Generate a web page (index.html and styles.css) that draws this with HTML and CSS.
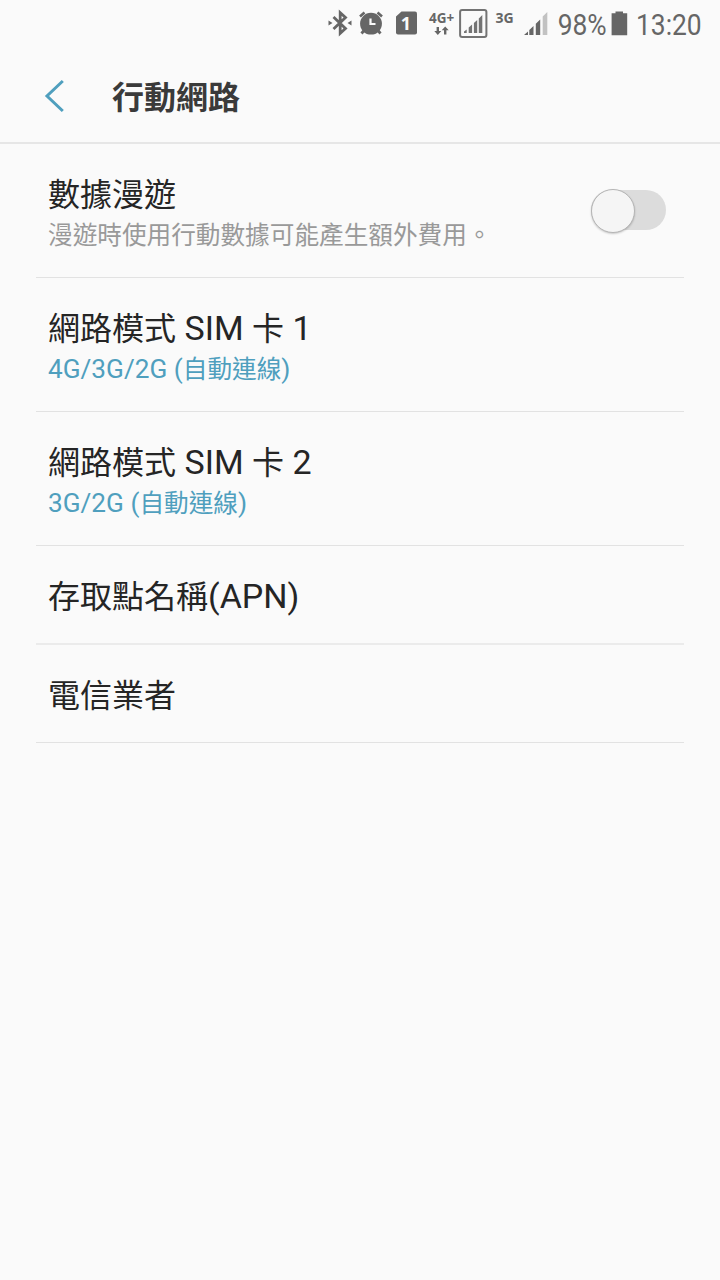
FILE: index.html
```
<!DOCTYPE html>
<html lang="zh-Hant">
<head>
    <meta charset="UTF-8">
    <meta name="viewport" content="width=device-width, initial-scale=1.0">
    <title>行動網路</title>
    <link rel="stylesheet" href="styles.css">
</head>
<body>
    <div class="status-bar">
        <svg class="icon-bluetooth" width="24" height="28" viewBox="0 0 24 28">
            <path d="M5.5 8 L17.5 19.5 L12.2 24.3 V3.7 L17.5 8.5 L5.5 20" fill="none" stroke="#666" stroke-width="2.8"/>
            <path d="M0.5 11.5 L4.5 14 L0.5 16.5 Z M23.5 11.5 L19.5 14 L23.5 16.5 Z" fill="#666"/>
        </svg>
        <svg class="icon-alarm" width="26" height="28" viewBox="0 0 26 28">
            <circle cx="13" cy="14.7" r="10.9" fill="#666"/>
            <path d="M2 7.5 L6.5 3.5 M24 7.5 L19.5 3.5" stroke="#666" stroke-width="2.6"/>
            <path d="M6 21.5 L3.5 24.5 M20 21.5 L22.5 24.5" stroke="#666" stroke-width="2.8"/>
            <path d="M12.5 9.5 V15 H17.5" fill="none" stroke="#fafafa" stroke-width="2.2"/>
        </svg>
        <svg class="icon-sim" width="22" height="28" viewBox="0 0 22 28">
            <path d="M5.5 2.5 H19 Q21 2.5 21 4.5 V23.5 Q21 25.5 19 25.5 H2 Q0 25.5 0 23.5 V7.5 Z" fill="#666"/>
            <text class="sim-number" x="10" y="20.6">1</text>
        </svg>
        <div class="network">
            <span class="network-type">4G+</span>
            <svg width="16" height="10" viewBox="0 0 16 10">
                <path d="M2.6 1 H5 V5 H7.3 L3.8 9 L0.3 5 H2.6 Z M10 8.6 H12.4 V4.2 H14.7 L11.2 0.4 L7.7 4.2 H10 Z" fill="#666"/>
            </svg>
        </div>
        <svg class="icon-signal-boxed" width="29" height="30" viewBox="0 0 29 30">
            <rect x="1.1" y="1.1" width="26.3" height="26.8" rx="2" fill="none" stroke="#737373" stroke-width="2"/>
            <path d="M5 24 V22.4 L7.7 20.4 V24 Z M9.7 24 V18.4 L13.1 15.6 V24 Z M14.9 24 V13.9 L18.2 11 V24 Z M19.8 24 V9.4 L23.3 6 V24 Z" fill="#737373"/>
        </svg>
        <span class="network-type second">3G</span>
        <svg class="icon-signal" width="26" height="28" viewBox="0 0 26 28">
            <path d="M0 25 L4 21.6 V25 Z M5.3 25 V20 L9.5 16 V25 Z M11.8 25 V13.8 L16.2 9.6 V25 Z" fill="#666"/>
            <path d="M18.7 25 V6.5 L23.3 2 V25 Z" fill="#c2c2c2"/>
        </svg>
        <span class="battery-level">98%</span>
        <svg class="icon-battery" width="17" height="28" viewBox="0 0 17 28">
            <path d="M0.6 3.2 H4.5 V1.4 H12 V3.2 H16.2 V25.2 H0.6 Z" fill="#666"/>
        </svg>
        <span class="clock">13:20</span>
    </div>

    <header>
        <svg class="back" width="24" height="36" viewBox="0 0 24 36">
            <path d="M19.8 3 L4 18 L19.8 33" fill="none" stroke="#4f9fbe" stroke-width="3"/>
        </svg>
        <h1>行動網路</h1>
    </header>

    <main class="settings">
        <div class="item item-roaming">
            <div>
                <div class="title">數據漫遊</div>
                <div class="summary muted">漫遊時使用行動數據可能產生額外費用。</div>
            </div>
            <div class="switch"><div class="thumb"></div></div>
        </div>
        <div class="item">
            <div>
                <div class="title">網路模式<span class="latin"> SIM </span>卡<span class="latin"> 1</span></div>
                <div class="summary"><span class="latin">4G/3G/2G (</span>自動連線<span class="latin">)</span></div>
            </div>
        </div>
        <div class="item">
            <div>
                <div class="title">網路模式<span class="latin"> SIM </span>卡<span class="latin"> 2</span></div>
                <div class="summary"><span class="latin">3G/2G (</span>自動連線<span class="latin">)</span></div>
            </div>
        </div>
        <div class="item item-apn">
            <div class="title">存取點名稱<span class="latin">(APN)</span></div>
        </div>
        <div class="item item-operator">
            <div class="title">電信業者</div>
        </div>
    </main>
</body>
</html>
```
FILE: styles.css
```
* {
    box-sizing: border-box;
}
body {
    margin: 0;
    min-height: 1280px;
    background-color: #fafafa;
    color: #252525;
    font-family: Roboto, "Noto Sans CJK TC", sans-serif;
}
svg {
    display: block;
    flex-shrink: 0;
}
.status-bar {
    display: flex;
    justify-content: flex-end;
    align-items: flex-start;
    height: 48px;
    padding-right: 18px;
    color: #666;
}
.icon-bluetooth {
    margin: 9px 6px 0 0;
}
.icon-alarm {
    margin: 9px 12px 0 0;
}
.icon-sim {
    margin: 9px 11px 0 0;
}
.sim-number {
    fill: #fafafa;
    font-family: "Open Sans", sans-serif;
    font-size: 18px;
    font-weight: bold;
    text-anchor: middle;
}
.network {
    display: flex;
    flex-direction: column;
    align-items: center;
    width: 26px;
    margin: 11px 4px 0 0;
}
.network-type {
    font-family: "Open Sans", sans-serif;
    font-size: 13.5px;
    font-weight: bold;
    line-height: 15px;
}
.icon-signal-boxed {
    margin: 9px 8px 0 0;
}
.second {
    width: 19px;
    margin: 10px 9px 0 0;
    font-size: 14px;
}
.icon-signal {
    margin: 10px 1px 0 0;
}
.battery-level,
.clock {
    margin-top: 7px;
    font-size: 30px;
    line-height: 35px;
    transform: scaleX(0.88);
    transform-origin: right;
}
.battery-level {
    margin-right: 5px;
}
.icon-battery {
    margin: 10px -1px 0 0;
}
header {
    display: flex;
    align-items: center;
    height: 96px;
    padding: 2px 42px 0 43px;
    border-bottom: 2px solid #e6e6e6;
}
h1 {
    margin: 0 0 0 45px;
    padding-top: 4px;
    color: #3a3a3a;
    font-size: 32px;
    line-height: 48px;
}
.settings {
    padding: 0 36px;
}
.item {
    display: flex;
    justify-content: space-between;
    align-items: flex-start;
    height: 134px;
    padding: 30px 18px 0 12px;
    border-bottom: 1px solid #e2e2e2;
}
.item-roaming {
    padding-top: 31px;
}
.item-apn {
    height: 99px;
    border-bottom: 2px solid #ebebeb;
}
.item-operator {
    height: 98px;
    padding-top: 31px;
}
.title {
    font-size: 32px;
    line-height: 40px;
}
.title .latin {
    font-size: 34px;
}
.summary {
    color: #4f9fbe;
    font-size: 24.65px;
    line-height: 40px;
}
.summary .latin {
    font-size: 26.2px;
}
.muted {
    padding-top: 1px;
    color: #999;
}
.switch {
    display: flex;
    width: 75px;
    height: 40px;
    margin-top: 15px;
    border-radius: 20px;
    background-color: #dcdcdc;
}
.thumb {
    width: 44px;
    height: 44px;
    margin-top: -1.5px;
    border: 1px solid #b5b5b5;
    border-radius: 50%;
    background-color: #f5f5f5;
    box-shadow: 0 1px 2px rgba(0, 0, 0, 0.2);
}
```
